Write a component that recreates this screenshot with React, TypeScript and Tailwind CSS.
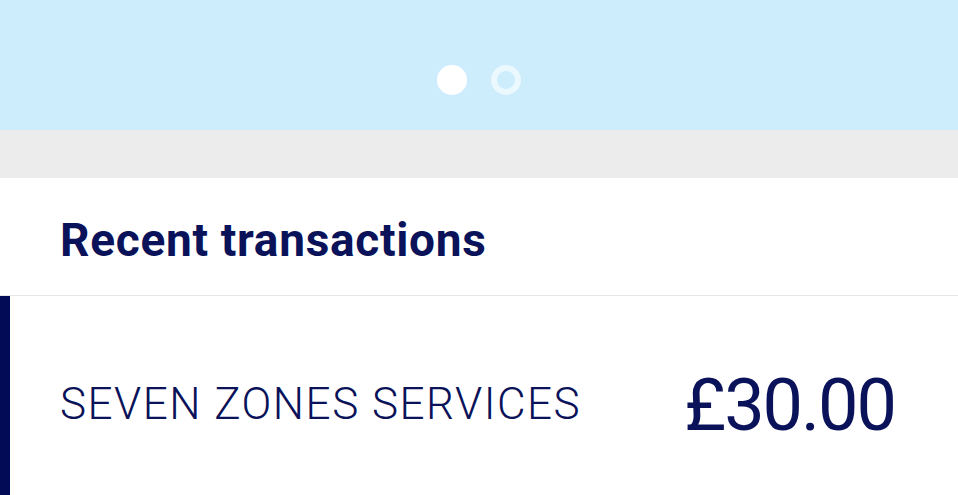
import React from 'react';

const Dots: React.FC = () => (
  <div className="flex items-center gap-[24px]">
    <span className="w-[30px] h-[30px] rounded-full bg-white" />
    <span className="w-[30px] h-[30px] rounded-full border-[6px] border-white/60" />
  </div>
);

export default function App() {
  return (
    <div className="w-[958px] h-[495px] overflow-hidden bg-white text-[#0a1259]" style={{ fontFamily: 'Roboto, "Noto Sans", sans-serif' }}>
      <div className="h-[130px] bg-[#cdedfc] flex items-center justify-center pt-[30px]">
        <Dots />
      </div>
      <div className="h-[48px] bg-[#ececec]" />
      <div className="h-[118px] flex items-center px-[60px] border-b border-[#e6e6e6] pt-[6px]">
        <h2 className="text-[46px] font-bold tracking-[0.7px] leading-none">Recent transactions</h2>
      </div>
      <div className="flex h-[200px]">
        <div className="w-[10px] bg-[#020b55]" />
        <div className="flex-1 flex items-start justify-between pl-[50px] pr-[63px] pt-[72px]">
          <span className="text-[44px] font-light tracking-[1.5px] leading-none mt-[14px]">SEVEN ZONES SERVICES</span>
          <span className="text-[72px] font-normal tracking-[-2px] leading-none mt-[2px]">£30.00</span>
        </div>
      </div>
    </div>
  );
}
